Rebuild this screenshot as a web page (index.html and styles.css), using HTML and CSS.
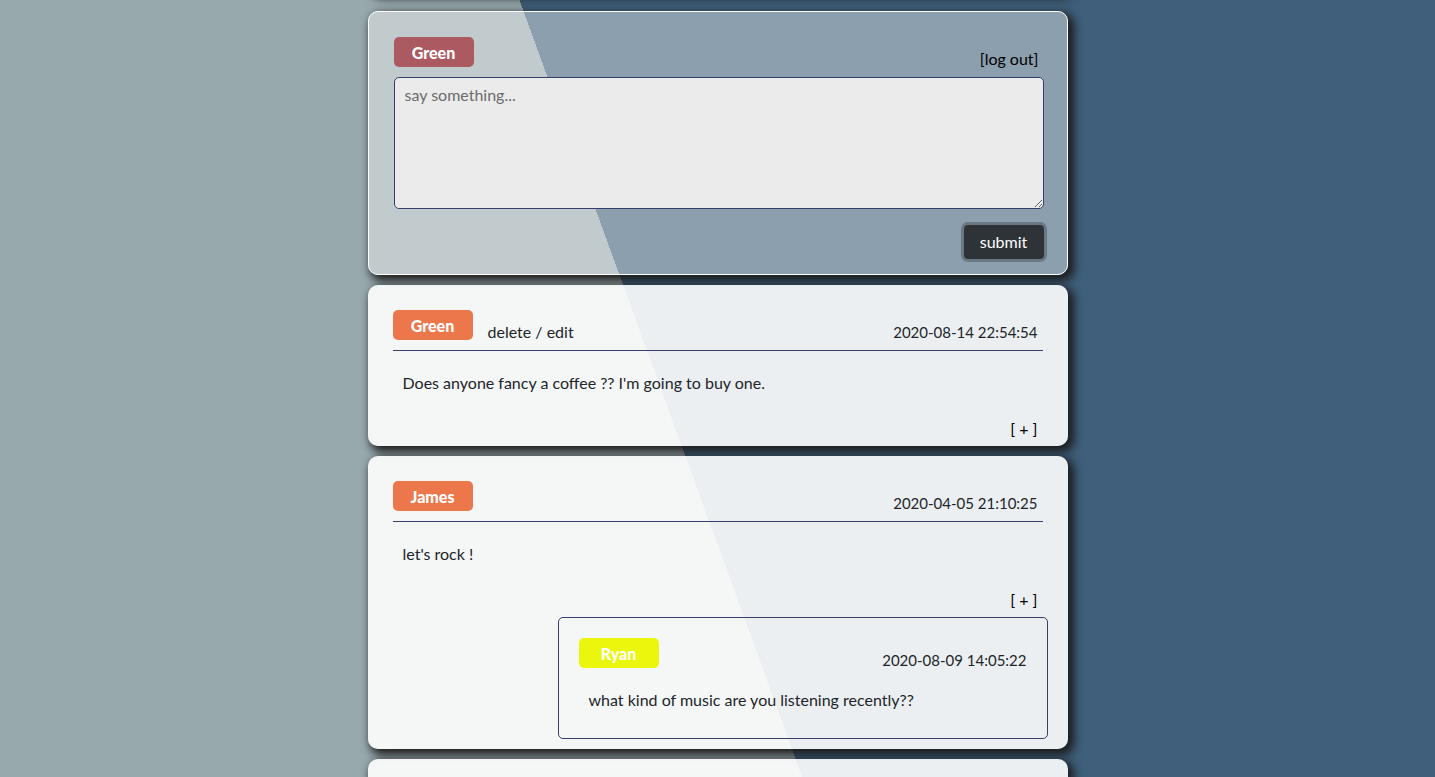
FILE: index.html
```html
<!DOCTYPE html>
<html lang="en">
<head>
<meta charset="utf-8">
<meta name="viewport" content="width=device-width, initial-scale=1">
<title>Message board</title>
<link rel="stylesheet" href="styles.css">
</head>
<body>
<main class="board">
  <div class="card intro"></div>

  <form class="card composer">
    <div class="head">
      <strong class="badge badge-self">Green</strong>
      <a class="link push" href="#">[log out]</a>
    </div>
    <textarea class="message" aria-label="Message" placeholder="say something..."></textarea>
    <button class="submit" type="button">submit</button>
  </form>

  <article class="card post">
    <header class="head ruled">
      <strong class="badge">Green</strong>
      <span class="actions"><a href="#">delete</a> / <a href="#">edit</a></span>
      <time class="push">2020-08-14 22:54:54</time>
    </header>
    <p class="text">Does anyone fancy a coffee ?? I'm going to buy one.</p>
    <button class="expand" type="button">[ + ]</button>
  </article>

  <article class="card post has-reply">
    <header class="head ruled">
      <strong class="badge">James</strong>
      <time class="push">2020-04-05 21:10:25</time>
    </header>
    <p class="text">let's rock !</p>
    <button class="expand" type="button">[ + ]</button>
    <section class="reply">
      <header class="head">
        <strong class="badge badge-reply">Ryan</strong>
        <time class="push">2020-08-09 14:05:22</time>
      </header>
      <p class="text">what kind of music are you listening recently??</p>
    </section>
  </article>

  <article class="card next"></article>
</main>
</body>
</html>
```

FILE: styles.css
```css
* {
  box-sizing: border-box;
}

body {
  margin: 0;
  min-height: 100vh;
  font: 16px/24px Lato, "Noto Sans", sans-serif;
  color: #212529;
  background: linear-gradient(70deg, #98a9ad 46.7%, #3f5f7b 46.7%);
}

a {
  color: inherit;
  text-decoration: none;
}

.board {
  width: 100%;
  max-width: 700px;
  min-height: 100vh;
  margin: 0 auto;
  display: flex;
  flex-direction: column;
  gap: 10px;
}

.card {
  flex: none;
  border-radius: 10px;
  background: rgba(255, 255, 255, 0.9);
  box-shadow: 4px 4px 10px 2px #1c1c1c;
}

.intro {
  height: 20px;
  margin: -28px 0 9px;
}

.composer {
  display: flex;
  flex-direction: column;
  padding: 25px 23px 15px 25px;
  border: 1px solid #fff;
  background: rgba(255, 255, 255, 0.4);
}

.head {
  display: flex;
  align-items: flex-start;
  gap: 15px;
  height: 40px;
  padding-right: 5px;
}

.ruled {
  height: 41px;
  border-bottom: 1px solid #363f6b;
}

.badge {
  width: 80px;
  height: 30px;
  border-radius: 5px;
  line-height: 32px;
  text-align: center;
  font-weight: 900;
  color: #fff;
  background: #ec774b;
}

.badge-self {
  background: #aa5a60;
}

.badge-reply {
  background: #eaf60c;
}

.link,
.actions,
.head time {
  padding-top: 10px;
}

.head time {
  font-size: 15px;
}

.link {
  color: #000;
}

.push {
  margin-left: auto;
}

.message {
  display: block;
  width: 100%;
  height: 132px;
  padding: 5px 10px;
  border: 1px solid #363f6b;
  border-radius: 5px;
  font: inherit;
  background: #ebebeb;
}

.message::placeholder {
  color: #6c6c6c;
}

.submit {
  align-self: flex-end;
  width: 80px;
  height: 34px;
  margin: 16px 0 0;
  padding: 0;
  border: 0;
  border-radius: 4px;
  font: inherit;
  color: #fff;
  background: #2e3338;
  box-shadow: 0 0 0 3px #6b7882;
}

.post {
  display: flex;
  flex-direction: column;
  padding: 25px 25px 5px;
}

.text {
  margin: 0;
  padding: 20px 10px 22px;
}

.expand {
  align-self: flex-end;
  padding: 0 5px;
  border: 0;
  font: inherit;
  color: #000;
  background: none;
}

.has-reply {
  padding-bottom: 10px;
}

.reply {
  align-self: flex-end;
  width: 490px;
  max-width: 100%;
  margin: 5px -5px 0 0;
  padding: 20px;
  border: 1px solid #363f6b;
  border-radius: 5px;
}

.reply .head {
  padding-right: 0;
}

.reply .text {
  padding: 10px 10px 6px;
}

.next {
  flex: 1;
  border-radius: 10px 10px 0 0;
}
```
